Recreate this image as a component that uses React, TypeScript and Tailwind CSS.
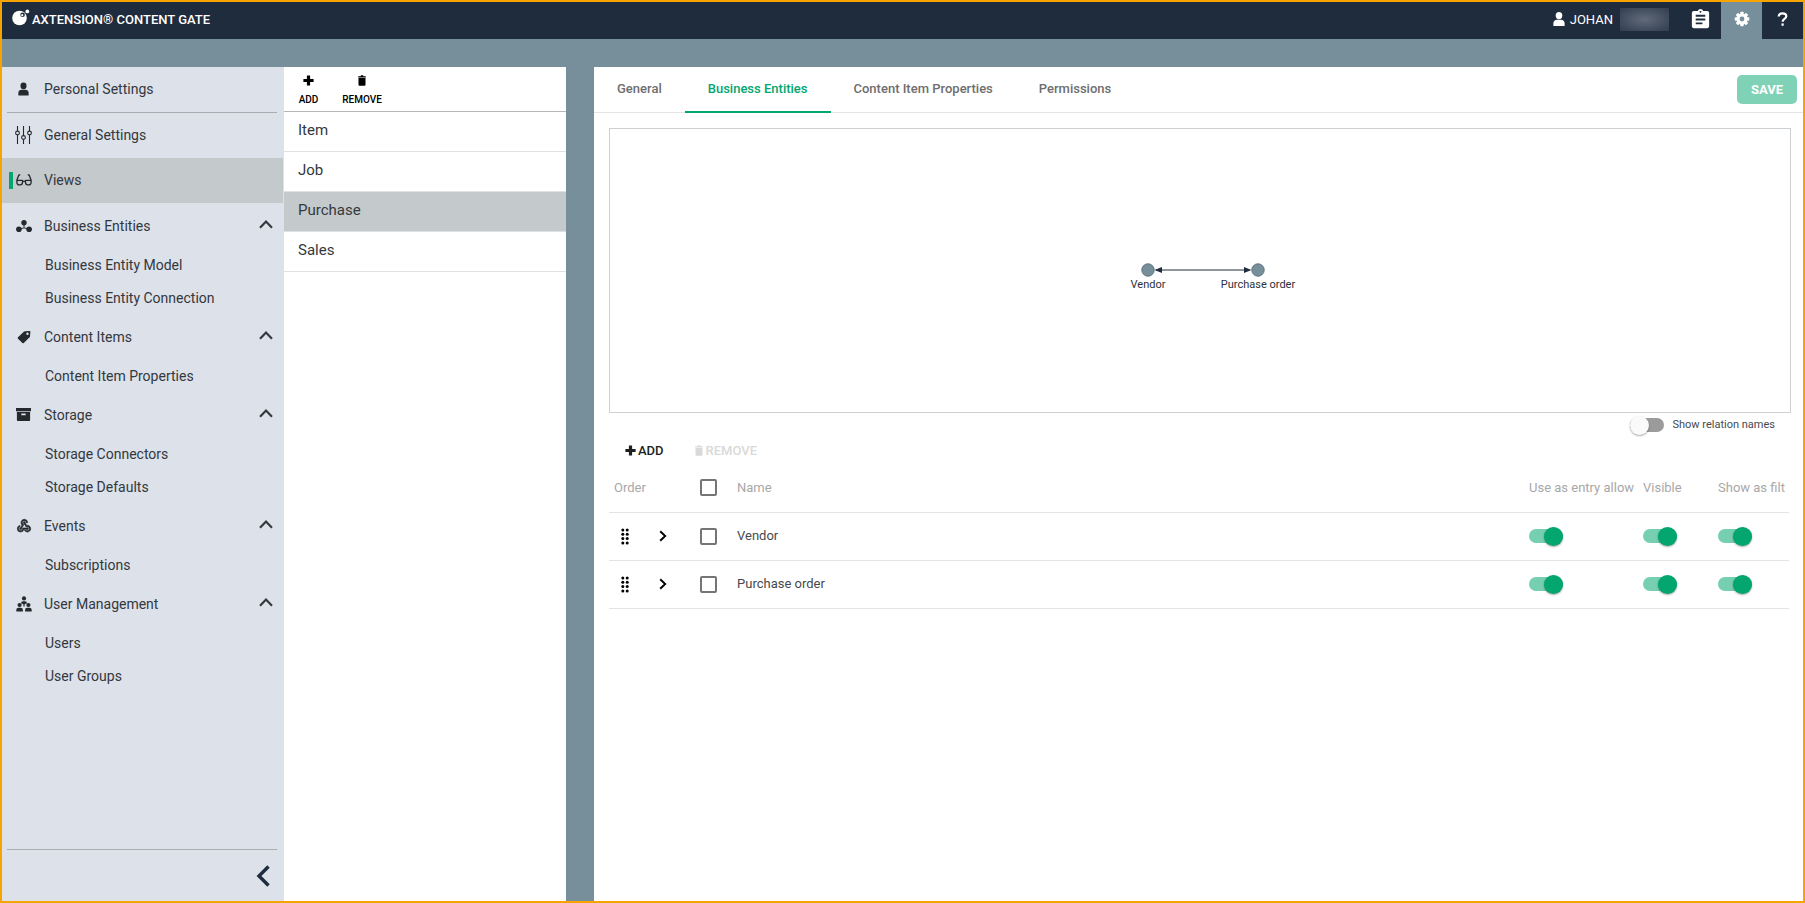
import React, { useState } from "react";
import { MdAssignment, MdWebhook } from "react-icons/md";

type IconProps = { className?: string };

const Person = ({ className }: IconProps) => (
  <svg viewBox="0 0 12 14" className={className} fill="currentColor" aria-hidden="true">
    <ellipse cx="6" cy="3.6" rx="3.3" ry="3.6" />
    <path d="M0.4 14v-2.6C0.4 9 2 7.8 4 7.8h4c2 0 3.600 1.200 3.600 3.600V14z" />
  </svg>
);

const Sliders = ({ className }: IconProps) => (
  <svg viewBox="0 0 17 18" className={className} fill="none" stroke="currentColor" strokeWidth="1.100" aria-hidden="true">
    <path d="M2.500 0v5M2.500 9v9M8.500 0v9.500M8.500 13.500V18M14.500 0v5M14.500 9v9" />
    <circle cx="2.500" cy="7" r="1.900" />
    <circle cx="8.500" cy="11.500" r="1.900" />
    <circle cx="14.500" cy="7" r="1.900" />
  </svg>
);

const Glasses = ({ className }: IconProps) => (
  <svg viewBox="0 0 16 12" className={className} fill="none" stroke="currentColor" strokeWidth="1.300" strokeLinejoin="round" aria-hidden="true">
    <path d="M4.300 0.800H3.600q-.8 0-1.100.9L0.900 6.300M11.700 0.800h.7q.8 0 1.100.9l1.600 4.600" />
    <path d="M0.900 6.300H6.500V8.600A2.300 2.300 0 0 1 4.200 10.900H3.200A2.300 2.300 0 0 1 0.900 8.600zM9.500 6.300h5.600V8.600a2.300 2.300 0 0 1-2.300 2.300h-1A2.300 2.300 0 0 1 9.500 8.600zM6.500 7.300h3" />
  </svg>
);

const Nodes = ({ className }: IconProps) => (
  <svg viewBox="0 0 16 12" className={className} fill="currentColor" aria-hidden="true">
    <path d="M8 3v4.500M3 9.500l4-1.500h2l4 1.500" stroke="currentColor" strokeWidth="1" fill="none" />
    <circle cx="8" cy="2.700" r="2.700" />
    <circle cx="2.900" cy="9.200" r="2.800" />
    <circle cx="13.100" cy="9.200" r="2.800" />
  </svg>
);

const Tag = ({ className }: IconProps) => (
  <svg viewBox="0 0 14 14" className={className} fill="currentColor" aria-hidden="true">
    <path
      fillRule="evenodd"
      d="M8 1.200 12.300 0.900a1 1 0 0 1 1.100 1.100L13 6.400a1.500 1.500 0 0 1-.4.900L6.800 13a1 1 0 0 1-1.400 0L1 8.700a1 1 0 0 1 0-1.400l5.800-5.600A1.800 1.800 0 0 1 8 1.200zM10.500 2.600a1.200 1.200 0 1 0 0 2.400 1.200 1.200 0 0 0 0-2.400z"
    />
  </svg>
);

const Archive = ({ className }: IconProps) => (
  <svg viewBox="0 0 15 13" className={className} fill="currentColor" aria-hidden="true">
    <path d="M0 0h15v3.300H0z" />
    <path fillRule="evenodd" d="M0.900 4h13.200v8.300a.7.7 0 0 1-.7.7H1.600a.7.7 0 0 1-.7-.7zM5.300 5.500v1.800h4.400V5.500z" />
  </svg>
);

const Team = ({ className }: IconProps) => (
  <svg viewBox="0 0 16 16" className={className} fill="currentColor" aria-hidden="true">
    <circle cx="8" cy="2.400" r="2.100" />
    <path d="M5 7.300q0-2 2-2h2q2 0 2 2L8.600 8.200v2.300H7.400V8.200z" />
    <circle cx="3.600" cy="9" r="2.100" />
    <circle cx="12.400" cy="9" r="2.100" />
    <path d="M0.300 15.500v-1.600q0-2.200 2.200-2.200h2.200q2.200 0 2.200 2.200v1.600zM9.100 15.500v-1.600q0-2.200 2.200-2.200h2.200q2.200 0 2.200 2.200v1.600z" />
  </svg>
);

const ChevronUp = ({ className }: IconProps) => (
  <svg viewBox="0 0 14 9" className={className} fill="none" stroke="currentColor" strokeWidth="2.200" aria-hidden="true">
    <path d="M1 7.800 7 1.600l6 6.200" />
  </svg>
);

const ChevronRight = ({ className }: IconProps) => (
  <svg viewBox="0 0 8 12" className={className} fill="none" stroke="currentColor" strokeWidth="1.900" aria-hidden="true">
    <path d="M1.200 1.200 6.200 6l-5 4.800" />
  </svg>
);

const ChevronLeft = ({ className }: IconProps) => (
  <svg viewBox="0 0 14 22" className={className} fill="none" stroke="currentColor" strokeWidth="3.400" aria-hidden="true">
    <path d="M12.500 1.500 3 11l9.500 9.500" />
  </svg>
);

const Plus = ({ className }: IconProps) => (
  <svg viewBox="0 0 11 11" className={className} fill="currentColor" aria-hidden="true">
    <path d="M3.900 .4h3.200v3.500h3.500v3.200H7.100v3.500H3.900V7.100H.4V3.900h3.500z" />
  </svg>
);

const Trash = ({ className }: IconProps) => (
  <svg viewBox="0 0 8 11" className={className} fill="currentColor" aria-hidden="true">
    <path d="M.2 1.200h2.300L3 .3h2l.5.900h2.300v1.200H.2zM.5 3h7v6.800a1 1 0 0 1-1 1h-5a1 1 0 0 1-1-1z" />
  </svg>
);

const Gear = ({ className }: IconProps) => (
  <svg viewBox="0 0 16 16" className={className} aria-hidden="true">
    <g fill="currentColor">
      <circle cx="8" cy="8" r="5.600" />
      <rect x="6.300" y="0.700" width="3.400" height="14.600" rx="0.800" />
      <rect x="6.300" y="0.700" width="3.400" height="14.600" rx="0.800" transform="rotate(45 8 8)" />
      <rect x="6.300" y="0.700" width="3.400" height="14.600" rx="0.800" transform="rotate(90 8 8)" />
      <rect x="6.300" y="0.700" width="3.400" height="14.600" rx="0.800" transform="rotate(135 8 8)" />
    </g>
    <circle cx="8" cy="8" r="2.400" fill="#768f9b" />
  </svg>
);

const Question = ({ className }: IconProps) => (
  <svg viewBox="0 0 11 14" className={className} fill="none" stroke="currentColor" strokeWidth="2.200" aria-hidden="true">
    <path d="M1.700 4.600C1.700 2.400 3.200 1.300 5.400 1.300s3.900 1.100 3.900 3c0 2.700-3.700 2.500-3.700 5.400" />
    <path d="M5.600 11.400v2.400" />
  </svg>
);

const Logo = ({ className }: IconProps) => (
  <svg viewBox="0 0 18 17" className={className} aria-hidden="true">
    <circle cx="7.500" cy="9" r="7.300" fill="#fff" />
    <circle cx="10.600" cy="5.800" r="2.300" fill="#1f2c3d" />
    <circle cx="10.200" cy="6.200" r="1.100" fill="#fff" />
    <circle cx="15.300" cy="2.400" r="1.900" fill="#fff" />
  </svg>
);

const Grip = ({ className }: IconProps) => (
  <svg viewBox="0 0 8 17" className={className} fill="currentColor" aria-hidden="true">
    {[2, 6.300, 10.600, 14.900].map((y) => (
      <g key={y}>
        <circle cx="1.800" cy={y} r="1.500" />
        <circle cx="6.200" cy={y} r="1.500" />
      </g>
    ))}
  </svg>
);

type Group = { label: string; icon: React.ReactNode; items: string[] };

const groups: Group[] = [
  { label: "Business Entities", icon: <Nodes className="h-3 w-4" />, items: ["Business Entity Model", "Business Entity Connection"] },
  { label: "Content Items", icon: <Tag className="size-3.5" />, items: ["Content Item Properties"] },
  { label: "Storage", icon: <Archive className="h-[13px] w-[15px]" />, items: ["Storage Connectors", "Storage Defaults"] },
  { label: "Events", icon: <MdWebhook className="size-4 [&>path:last-child]:stroke-current [&>path:last-child]:stroke-1" />, items: ["Subscriptions"] },
  { label: "User Management", icon: <Team className="size-4" />, items: ["Users", "User Groups"] },
];

function NavLink({ label, icon, active }: { label: string; icon: React.ReactNode; active?: boolean }) {
  return (
    <a
      href="#"
      aria-current={active ? "page" : undefined}
      className={`relative flex h-[45px] items-center gap-3 pb-px pl-[13px] ${active ? "mr-px bg-[#c4c9cb]" : ""}`}
    >
      {active && <span className="absolute top-3.5 left-[7px] h-[17px] w-1 bg-[#02a66e]" />}
      <span className="flex w-[17px] justify-center text-[#25292d]">{icon}</span>
      {label}
    </a>
  );
}

function Sidebar() {
  return (
    <nav className="flex w-[282px] shrink-0 flex-col bg-[#dde1e9] text-sm text-[#33383e]">
      <NavLink label="Personal Settings" icon={<Person className="h-3.5 w-[11px]" />} />
      <hr className="mr-[7px] ml-[5px] border-[#a9adb2]" />
      <NavLink label="General Settings" icon={<Sliders className="h-[18px] w-[17px]" />} />
      <NavLink label="Views" icon={<Glasses className="h-3 w-4" />} active />
      {groups.map((group) => (
        <section key={group.label}>
          <button type="button" aria-expanded="true" className="flex h-[45px] w-full items-center gap-3 pr-[11px] pl-[13px] text-left">
            <span className="flex w-[17px] justify-center text-[#25292d]">{group.icon}</span>
            <span className="flex-1">{group.label}</span>
            <ChevronUp className="mb-0.5 h-[9px] w-3.5" />
          </button>
          <ul>
            {group.items.map((item) => (
              <li key={item}>
                <a href="#" className="flex h-[33px] items-center pt-px pl-[43px]">
                  {item}
                </a>
              </li>
            ))}
          </ul>
        </section>
      ))}
      <div className="mt-auto mr-[7px] ml-[5px] flex h-[52px] items-center justify-end border-t border-[#a9adb2] pr-[7px]">
        <button type="button" aria-label="Collapse menu" className="text-[#1f2c3d]">
          <ChevronLeft className="h-[22px] w-3.5" />
        </button>
      </div>
    </nav>
  );
}

function ViewList() {
  return (
    <section className="w-[282px] shrink-0 bg-white">
      <div className="flex h-[45px] gap-[22px] border-b border-[#b4b6b8] pt-2 pl-3.5 text-[10px] font-medium text-black">
        <button type="button" className="flex w-[21px] flex-col items-center gap-2 self-start">
          <Plus className="size-[11px]" />
          <span className="leading-3">ADD</span>
        </button>
        <button type="button" className="flex w-[42px] flex-col items-center gap-2 self-start">
          <Trash className="h-[11px] w-2" />
          <span className="leading-3">REMOVE</span>
        </button>
      </div>
      <ul className="text-[15px] text-[#33383e]">
        {["Item", "Job", "Purchase", "Sales"].map((name) => (
          <li key={name}>
            <a
              href="#"
              className={`flex h-10 items-center border-b border-[#dfe1e3] pb-0.5 pl-3.5 ${name === "Purchase" ? "bg-[#c4c9cb]" : ""}`}
            >
              {name}
            </a>
          </li>
        ))}
      </ul>
    </section>
  );
}

function Toggle({ label, initial, id }: { label: string; initial: boolean; id?: string }) {
  const [on, setOn] = useState(initial);
  return (
    <span className="relative flex h-5 w-[34px] items-center">
      <input
        id={id}
        type="checkbox"
        role="switch"
        aria-label={label}
        checked={on}
        onChange={() => setOn(!on)}
        className="peer h-3.5 w-[34px] cursor-pointer appearance-none rounded-full bg-[#9b9b9b] checked:bg-[#75cfb0]"
      />
      <span className="pointer-events-none absolute left-0 size-[19px] rounded-full bg-[#fafafa] shadow-[0_1px_2px_rgba(0,0,0,0.35)] peer-checked:left-[15px] peer-checked:bg-[#02a66e]" />
    </span>
  );
}

function Box({ label }: { label: string }) {
  return <input type="checkbox" aria-label={label} className="block size-[17px] appearance-none rounded-[2px] border-2 border-[#757575] checked:bg-[#02a66e]" />;
}

function EntityGraph() {
  return (
    <div className="relative mt-[15px] mr-3 ml-[15px] h-[285px] border border-[#cdd1d3]">
      <svg viewBox="0 0 200 40" className="absolute top-[131px] left-1/2 h-10 w-[200px] -translate-x-[77px]" role="img" aria-label="Vendor linked to Purchase order">
        <g transform="translate(0 2)">
          <path d="M33 8h89" stroke="#1f2c3d" strokeWidth="1.200" />
          <path d="M31.500 8l7.500-3v6zM128.500 8l-7.500-3v6z" fill="#1f2c3d" />
          <circle cx="25" cy="8" r="6.200" fill="#768f9b" stroke="#5d7380" />
          <circle cx="135" cy="8" r="6.200" fill="#768f9b" stroke="#5d7380" />
        </g>
        <g fill="#2c3137" fontSize="11" textAnchor="middle">
          <text x="25" y="28">Vendor</text>
          <text x="135" y="28">Purchase order</text>
        </g>
      </svg>
    </div>
  );
}

function EntityTable() {
  const toggles = ["Use as entry allow", "Visible", "Show as filt"];
  return (
    <table className="ml-[15px] w-[calc(100%-29px)] table-fixed text-left text-[13px] text-[#474a4d]">
      <colgroup>
        <col className="w-8" />
        <col className="w-[59px]" />
        <col className="w-[37px]" />
        <col />
        <col className="w-[114px]" />
        <col className="w-[75px]" />
        <col className="w-[71px]" />
      </colgroup>
      <thead>
        <tr className="h-12 border-b border-[#e4e4e4] whitespace-nowrap text-[#a8a8a8]">
          <th colSpan={2} className="pl-[5px] font-normal">Order</th>
          <th><Box label="Select all" /></th>
          <th className="font-normal">Name</th>
          {toggles.map((name) => (
            <th key={name} className="font-normal">{name}</th>
          ))}
        </tr>
      </thead>
      <tbody>
        {["Vendor", "Purchase order"].map((name) => (
          <tr key={name} className="h-12 border-b border-[#e4e4e4]">
            <td className="pl-3 text-black"><Grip className="h-[17px] w-2" /></td>
            <td className="pl-[18px] text-black">
              <button type="button" aria-label={`Expand ${name}`} className="block">
                <ChevronRight className="h-3 w-2" />
              </button>
            </td>
            <td><Box label={`Select ${name}`} /></td>
            <td>{name}</td>
            {toggles.map((column) => (
              <td key={column}><Toggle label={`${column} ${name}`} initial /></td>
            ))}
          </tr>
        ))}
      </tbody>
    </table>
  );
}

export default function App() {
  return (
    <div className="flex min-h-screen flex-col border-2 border-[#f8a400] bg-[#768f9b] font-[Roboto,'Liberation_Sans',sans-serif]">
      <header className="flex h-[37px] items-stretch bg-[#1f2c3d] text-white">
        <h1 className="flex items-center gap-0.5 pb-0.5 pl-2.5 text-[13px] font-medium">
          <Logo className="mb-1 h-[17px] w-[18px]" />
          AXTENSION® CONTENT GATE
        </h1>
        <div className="ml-auto flex items-stretch">
          <div className="flex items-center gap-[5px] pb-0.5 text-[13px]">
            <Person className="mb-0.5 h-3.5 w-3" />
            <span className="mr-0.5">JOHAN</span>
            <span className="h-[23px] w-[49px] bg-radial from-[#606a7a] to-[#323d4e]" />
          </div>
          <button type="button" aria-label="Tasks" className="flex w-[52px] items-center justify-center pb-0.5 pl-2.5">
            <MdAssignment className="size-[23px]" />
          </button>
          <button type="button" aria-label="Settings" className="flex w-[41px] items-center justify-center bg-[#768f9b] pb-1">
            <Gear className="size-4" />
          </button>
          <button type="button" aria-label="Help" className="flex w-[41px] items-center justify-center pb-1">
            <Question className="h-3.5 w-[11px]" />
          </button>
        </div>
      </header>
      <div className="flex flex-1 pt-7">
        <Sidebar />
        <ViewList />
        <main className="ml-7 min-w-0 flex-1 bg-white">
          <div className="flex h-[46px] items-stretch border-b border-[#e4e4e4]">
            <div role="tablist" className="flex text-[13px] font-medium text-[#6e6e6e]">
              {["General", "Business Entities", "Content Item Properties", "Permissions"].map((tab) => (
                <button
                  key={tab}
                  type="button"
                  role="tab"
                  aria-selected={tab === "Business Entities"}
                  className={`-mb-px border-b-2 px-[23px] ${tab === "Business Entities" ? "border-[#02a66e] text-[#02a66e]" : "border-transparent"}`}
                >
                  {tab}
                </button>
              ))}
            </div>
            <button type="button" className="mt-2 mr-1.5 ml-auto h-[29px] rounded-[5px] bg-[#80d2b6] px-3.5 text-[13px] font-bold text-white">
              SAVE
            </button>
          </div>
          <EntityGraph />
          <div className="flex h-6 items-center justify-end gap-2 pr-7 text-[11px] text-[#474a4d]">
            <Toggle id="relation-names" label="Show relation names" initial={false} />
            <label htmlFor="relation-names">Show relation names</label>
          </div>
          <div className="flex h-[27px] items-center gap-[31px] pl-[31px] text-[13px] font-medium">
            <button type="button" className="flex h-5 items-center gap-0.5 text-[#1d1f21]">
              <Plus className="size-[11px]" />
              ADD
            </button>
            <button type="button" disabled className="flex h-5 items-center gap-[3px] text-[#d9d9d9]">
              <Trash className="h-[11px] w-2" />
              REMOVE
            </button>
          </div>
          <EntityTable />
        </main>
      </div>
    </div>
  );
}
